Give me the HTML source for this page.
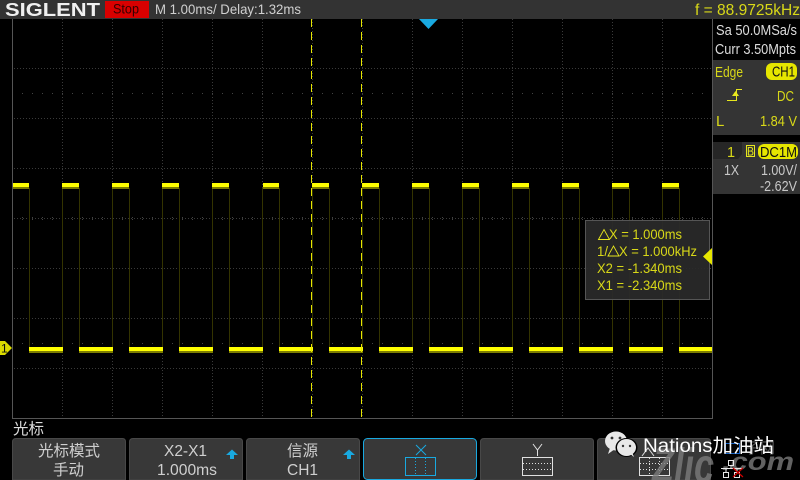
<!DOCTYPE html>
<html><head><meta charset="utf-8">
<style>
html,body{margin:0;padding:0;background:#000;width:800px;height:480px;overflow:hidden}
svg{display:block}
text{font-family:"Liberation Sans","Noto Sans CJK SC",sans-serif}
</style></head><body>
<svg width="800" height="480" viewBox="0 0 800 480" xmlns="http://www.w3.org/2000/svg">
<rect width="800" height="480" fill="#000"/>
<!-- grid -->
<g stroke="#3a3a3a" stroke-width="1" stroke-dasharray="1 2" fill="none" shape-rendering="crispEdges">
<path d="M62.5 19V418M112.5 19V418M162.5 19V418M212.5 19V418M262.5 19V418M312.5 19V418M362.5 19V418M412.5 19V418M462.5 19V418M512.5 19V418M562.5 19V418M612.5 19V418M662.5 19V418"/>
<path d="M14 68.5H712M14 118.5H712M14 168.5H712M14 218.5H712M14 268.5H712M14 318.5H712M14 368.5H712"/>
</g>
<g stroke="#444" stroke-width="1" stroke-dasharray="1 9" fill="none" shape-rendering="crispEdges">
<path d="M22 93.5H712M22 343.5H712M22 217.5H712M22 219.5H712"/>
</g>
<!-- frame -->
<path d="M12.5 19V418.5H712.5V19" fill="none" stroke="#555" shape-rendering="crispEdges"/>
<!-- signal edges -->
<g stroke="#333300" stroke-width="1" fill="none" shape-rendering="crispEdges">
<path d="M29.5 188V348M62.5 188V348M79.5 188V348M112.5 188V348M129.5 188V348M162.5 188V348M179.5 188V348M212.5 188V348M229.5 188V348M262.5 188V348M279.5 188V348M312.5 188V348M329.5 188V348M362.5 188V348M379.5 188V348M412.5 188V348M429.5 188V348M462.5 188V348M479.5 188V348M512.5 188V348M529.5 188V348M562.5 188V348M579.5 188V348M612.5 188V348M629.5 188V348M662.5 188V348M679.5 188V348"/>
</g>
<!-- signal dim -->
<g stroke="#7d7d00" stroke-width="2" fill="none" shape-rendering="crispEdges">
<path d="M13 188H29M62 188H79M112 188H129M162 188H179M212 188H229M263 188H279M312 188H329M362 188H379M412 188H429M462 188H479M512 188H529M562 188H579M612 188H629M662 188H679"/>
<path d="M29 352H63M79 352H113M129 352H163M179 352H213M229 352H263M279 352H313M329 352H363M379 352H413M429 352H463M479 352H513M529 352H563M579 352H613M629 352H663M679 352H712"/>
</g>
<!-- signal bright -->
<g stroke="#ffff00" stroke-width="4" fill="none" shape-rendering="crispEdges">
<path d="M13 185H29M62 185H79M112 185H129M162 185H179M212 185H229M263 185H279M312 185H329M362 185H379M412 185H429M462 185H479M512 185H529M562 185H579M612 185H629M662 185H679"/>
<path d="M29 349H63M79 349H113M129 349H163M179 349H213M229 349H263M279 349H313M329 349H363M379 349H413M429 349H463M479 349H513M529 349H563M579 349H613M629 349H663M679 349H712"/>
</g>
<!-- cursors -->
<g stroke="#e6e600" stroke-width="1" stroke-dasharray="8 5" fill="none" shape-rendering="crispEdges">
<path d="M311.5 19V418M361.5 19V418"/>
</g>
<!-- top bar -->
<rect x="0" y="0" width="800" height="19" fill="#333"/>
<text x="5" y="16" font-size="18.500" font-weight="700" fill="#f0f0f0" textLength="95" lengthAdjust="spacingAndGlyphs">SIGLENT</text>
<rect x="105" y="1" width="44" height="17" fill="#d90000"/>
<text x="113" y="13.500" font-size="13.500" fill="#300" textLength="26" lengthAdjust="spacingAndGlyphs">Stop</text>
<text x="155" y="14" font-size="14" fill="#d0d0d0" textLength="146" lengthAdjust="spacingAndGlyphs">M 1.00ms/ Delay:1.32ms</text>
<text x="695" y="15" font-size="15.500" fill="#d8d818" textLength="105" lengthAdjust="spacingAndGlyphs">f = 88.9725kHz</text>
<!-- trigger-pos arrow -->
<path d="M419 19H438L428.500 29Z" fill="#19a9e0"/>
<!-- right panel -->
<rect x="712" y="19" width="1" height="400" fill="#555"/>
<text x="716" y="35" font-size="14.500" fill="#dcdcdc" textLength="81" lengthAdjust="spacingAndGlyphs">Sa 50.0MSa/s</text>
<text x="715" y="54" font-size="14.500" fill="#dcdcdc" textLength="81" lengthAdjust="spacingAndGlyphs">Curr 3.50Mpts</text>
<rect x="713" y="60" width="87" height="75" fill="#343434"/>
<text x="715" y="77" font-size="15" fill="#d8d818" textLength="28" lengthAdjust="spacingAndGlyphs">Edge</text>
<rect x="766" y="63" width="31" height="17" rx="6" fill="#e6e600"/>
<text x="772" y="76.500" font-size="15" fill="#111" textLength="23" lengthAdjust="spacingAndGlyphs">CH1</text>
<path d="M727 100.500H736.500V89.500H742" fill="none" stroke="#e6e61e" stroke-width="1" shape-rendering="crispEdges"/>
<path d="M732 96L735.500 91L739 96Z" fill="#e6e61e"/>
<text x="777" y="101" font-size="15" fill="#d8d818" textLength="17" lengthAdjust="spacingAndGlyphs">DC</text>
<text x="716" y="126" font-size="15" fill="#d8d818">L</text>
<text x="760" y="126" font-size="15" fill="#d8d818" textLength="37" lengthAdjust="spacingAndGlyphs">1.84 V</text>
<rect x="713" y="142" width="87" height="52" fill="#343434"/>
<path d="M713 142H742V154L738 159H713Z" fill="#262626"/>
<text x="727" y="157" font-size="14.500" fill="#d8d818">1</text>
<rect x="746.500" y="145.500" width="8" height="11" fill="none" stroke="#e6e61e"/>
<text x="747" y="155.500" font-size="12" fill="#e6e61e" textLength="7" lengthAdjust="spacingAndGlyphs">B</text>
<rect x="758" y="144" width="40" height="15" rx="6" fill="#e6e600"/>
<text x="760" y="157" font-size="14.500" fill="#111" textLength="37" lengthAdjust="spacingAndGlyphs">DC1M</text>
<text x="724" y="175" font-size="14.500" fill="#c8c8c8" textLength="15" lengthAdjust="spacingAndGlyphs">1X</text>
<text x="761" y="175" font-size="14.500" fill="#c8c8c8" textLength="36" lengthAdjust="spacingAndGlyphs">1.00V/</text>
<text x="760" y="191" font-size="14.500" fill="#c8c8c8" textLength="37" lengthAdjust="spacingAndGlyphs">-2.62V</text>
<!-- cursor readout -->
<rect x="585.500" y="220.500" width="124" height="79" fill="#2a2a2a" fill-opacity=".93" stroke="#555" shape-rendering="crispEdges"/>
<g font-size="14" fill="#d8d818">
<path d="M598.500 239.500L604 229.500L609.500 239.500Z" fill="none" stroke="#e6e61e" stroke-width=".9"/>
<text x="609" y="239" textLength="73" lengthAdjust="spacingAndGlyphs">X = 1.000ms</text>
<text x="597" y="256" textLength="11" lengthAdjust="spacingAndGlyphs">1/</text>
<path d="M608 256L613.500 246L619 256Z" fill="none" stroke="#e6e61e" stroke-width=".9"/>
<text x="619" y="256" textLength="78" lengthAdjust="spacingAndGlyphs">X = 1.000kHz</text>
<text x="597" y="273" textLength="85" lengthAdjust="spacingAndGlyphs">X2 = -1.340ms</text>
<text x="597" y="290" textLength="85" lengthAdjust="spacingAndGlyphs">X1 = -2.340ms</text>
</g>
<path d="M712 248V265L703 256.500Z" fill="#e6e600"/>
<!-- ch1 marker -->
<path d="M0 341H5L12 348L5 355H0Z" fill="#dcdc00"/>
<text x="1" y="352.500" font-size="12" fill="#111">1</text>
<!-- bottom -->
<text x="13" y="434" font-size="15.500" fill="#dcdcdc">光标</text>
<g fill="#383838" stroke="#484848" stroke-width="1">
<path d="M12.500 480V442Q12.500 438.500 16 438.500H122.500Q125.500 438.500 125.500 442V480Z"/>
<path d="M129.500 480V442Q129.500 438.500 133 438.500H239.500Q242.500 438.500 242.500 442V480Z"/>
<path d="M246.500 480V442Q246.500 438.500 250 438.500H356.500Q359.500 438.500 359.500 442V480Z"/>
<path d="M480.500 480V442Q480.500 438.500 484 438.500H590.500Q593.500 438.500 593.500 442V480Z"/>
<path d="M597.500 480V442Q597.500 438.500 601 438.500H707.500Q710.500 438.500 710.500 442V480Z"/>
</g>
<rect x="363.500" y="438.500" width="113" height="41" rx="4" fill="#383838" stroke="#19a9e0"/>
<g fill="#cfcfcf" font-size="15.500">
<text x="38" y="456" textLength="62" lengthAdjust="spacingAndGlyphs">光标模式</text>
<text x="53" y="475" textLength="31" lengthAdjust="spacingAndGlyphs">手动</text>
<text x="164" y="456" textLength="43" lengthAdjust="spacingAndGlyphs">X2-X1</text>
<text x="157" y="475" textLength="60" lengthAdjust="spacingAndGlyphs">1.000ms</text>
<text x="287" y="456" textLength="31" lengthAdjust="spacingAndGlyphs">信源</text>
<text x="287" y="475" textLength="31" lengthAdjust="spacingAndGlyphs">CH1</text>
</g>
<path d="M226 455L232 449.500L238 455H234V459H230V455Z" fill="#19a9e0"/>
<path d="M343 455L349 449.500L355 455H351V459H347V455Z" fill="#19a9e0"/>
<!-- X icon -->
<g fill="none" stroke="#19a9e0" stroke-width="1" shape-rendering="crispEdges">
<rect x="405.500" y="457.500" width="30" height="18"/>
<path d="M415.500 458V475M425.500 458V475" stroke-dasharray="1 2"/>
</g>
<path d="M416 445L426 455M426 445L416 455" stroke="#19a9e0" fill="none"/>
<!-- Y icon -->
<g fill="none" stroke="#e0e0e0" stroke-width="1" shape-rendering="crispEdges">
<rect x="522.500" y="457.500" width="30" height="18"/>
<path d="M523 463.500H552M523 469.500H552" stroke-dasharray="1 2"/>
<path d="M537.500 450V456"/>
</g>
<path d="M533 444L537.500 450L542 444" stroke="#e0e0e0" fill="none"/>
<!-- XY icon -->
<g fill="none" stroke="#e0e0e0" stroke-width="1" shape-rendering="crispEdges">
<rect x="639.500" y="457.500" width="30" height="18"/>
<path d="M640 463.500H669M640 469.500H669M649.500 458V475M659.500 458V475" stroke-dasharray="1 2"/>
</g>
<path d="M642 456L648 448L654 456" stroke="#e0e0e0" fill="none"/>
<!-- status area -->
<rect x="712" y="438" width="88" height="42" fill="#000"/>
<rect x="725.500" y="443.500" width="14" height="10" fill="none" stroke="#1a66c8" stroke-width="1"/>
<!-- watermark -->
<g fill="#7a7a7a" fill-opacity=".8">
<text x="652" y="482" font-size="48" font-weight="700" font-style="italic" textLength="62" lengthAdjust="spacingAndGlyphs">Zlic</text>
<text x="722" y="470" font-size="25" font-weight="700" font-style="italic" textLength="72" lengthAdjust="spacingAndGlyphs">.com</text>
<text x="745" y="453" font-size="15" fill-opacity=".7">子网</text>
</g>
<g fill="none" stroke="#e8e8e8" stroke-width="1" shape-rendering="crispEdges">
<rect x="728.500" y="460.500" width="5" height="5"/>
<rect x="723.500" y="472.500" width="5" height="5"/>
<rect x="734.500" y="472.500" width="5" height="5"/>
<path d="M721 468.500H743M731 466V469M726 469V472M737 469V472"/>
</g>
<path d="M733 468L743 477M743 468L733 477" stroke="#d00000" stroke-width="1.200"/>
<ellipse cx="616" cy="441" rx="11" ry="9.500" fill="#e8e8e8"/>
<path d="M610 448L608 454L615 449Z" fill="#e8e8e8"/>
<ellipse cx="626.500" cy="447.500" rx="11" ry="9.500" fill="#000"/>
<ellipse cx="626.500" cy="447.500" rx="9.500" ry="8.500" fill="#e8e8e8"/>
<path d="M630 454L634 457L632 452Z" fill="#e8e8e8"/>
<circle cx="612" cy="438" r="1.400" fill="#333"/><circle cx="620" cy="438" r="1.400" fill="#333"/>
<circle cx="623" cy="446" r="1.200" fill="#333"/><circle cx="630" cy="446" r="1.200" fill="#333"/>
<text x="643" y="452" font-size="19" fill="#fff" textLength="131" lengthAdjust="spacingAndGlyphs">Nations加油站</text>
</svg>
</body></html>
